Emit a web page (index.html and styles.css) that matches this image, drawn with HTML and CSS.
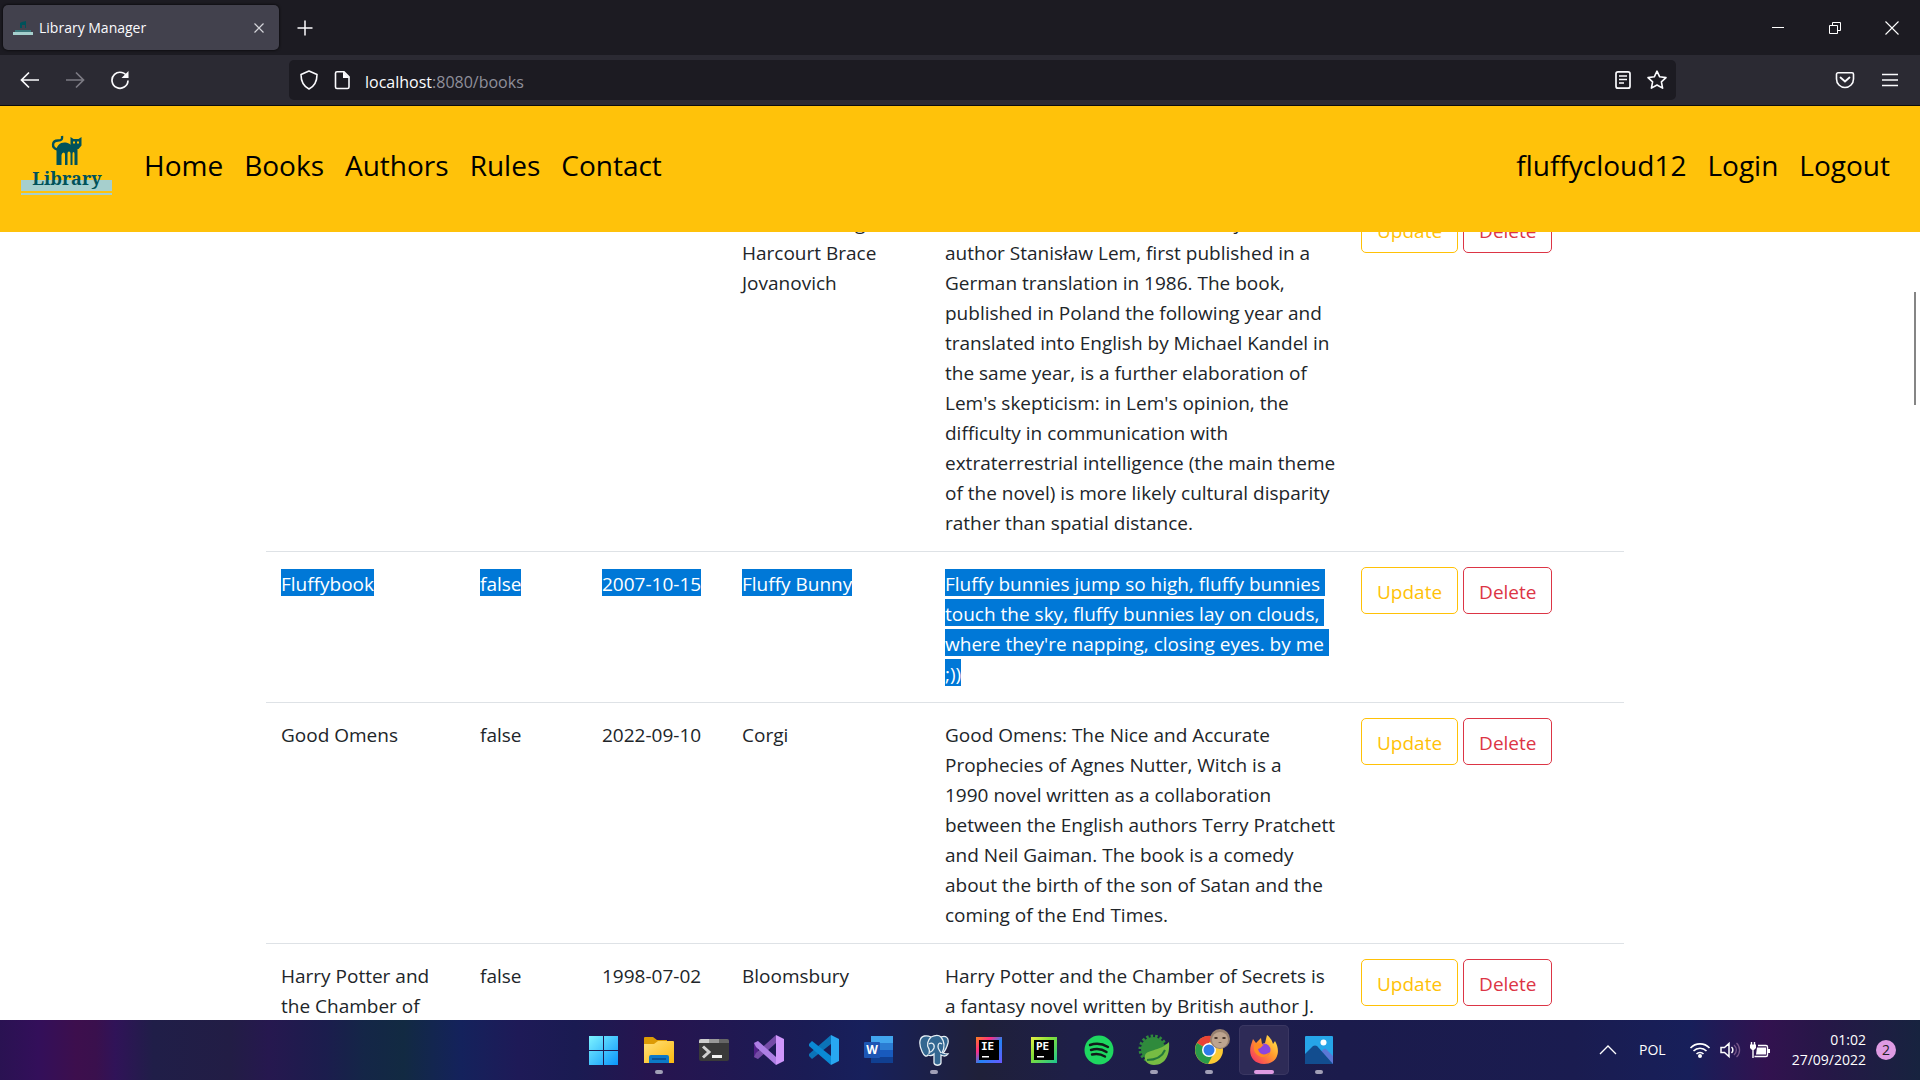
FILE: index.html
```html
<!DOCTYPE html>
<html lang="en">
<head>
<meta charset="utf-8">
<title>Library Manager</title>
<link rel="stylesheet" href="styles.css">
</head>
<body>
<div class="tabs">
  <div class="tab">
    <svg class="favicon" width="20" height="20" viewBox="0 0 20 20"><path d="M7 10V5l2-1 4-1v7h-1V7H9v3z" fill="#00525a"/><path d="M0 14h20v3H0z" fill="#a6cfcd"/><path d="M2 12h16v2H2z" fill="#39767a"/></svg>
    <span class="tab-title">Library Manager</span>
    <button class="plain" aria-label="Close tab"><svg width="12" height="12" viewBox="0 0 12 12"><path d="M1.500 1.500l9 9m0-9l-9 9" stroke="#d4d4da" stroke-width="1.200"/></svg></button>
  </div>
  <button class="plain new-tab" aria-label="New tab"><svg width="16" height="16" viewBox="0 0 16 16"><path d="M8 .5v15M.5 8h15" stroke="#fbfbfe" stroke-width="1.500"/></svg></button>
  <div class="window-buttons">
    <button class="plain" aria-label="Minimize"><svg width="14" height="14" viewBox="0 0 14 14"><path d="M1 6.500h12" stroke="#fff"/></svg></button>
    <button class="plain" aria-label="Restore"><svg width="14" height="14" viewBox="0 0 14 14"><path d="M1.500 4.500h8v8h-8zM4.500 4V1.500h8v8H10" fill="none" stroke="#fff"/></svg></button>
    <button class="plain" aria-label="Close"><svg width="14" height="14" viewBox="0 0 14 14"><path d="M.5.5l13 13m0-13l-13 13" stroke="#fff" stroke-width="1.100"/></svg></button>
  </div>
</div>
<div class="toolbar">
  <div class="history">
    <button class="plain" aria-label="Back"><svg width="20" height="20" viewBox="0 0 20 20"><path d="M19 10H2M9 2.500L1.500 10 9 17.500" fill="none" stroke="#fbfbfe" stroke-width="1.700"/></svg></button>
    <button class="plain" aria-label="Forward"><svg width="20" height="20" viewBox="0 0 20 20"><path d="M1 10h17M11 2.500l7.500 7.500-7.500 7.500" fill="none" stroke="#7c7b84" stroke-width="1.700"/></svg></button>
    <button class="plain" aria-label="Reload"><svg width="20" height="20" viewBox="0 0 20 20"><path d="M17.500 7.500A8 8 0 1 0 18 10.500" fill="none" stroke="#fbfbfe" stroke-width="1.700"/><path d="M18.500 1v7h-7z" fill="#fbfbfe"/></svg></button>
  </div>
  <div class="url-bar">
    <svg width="20" height="20" viewBox="0 0 20 20"><path d="M10 1l8 3.500c0 6-2 11.500-8 14.500-6-3-8-8.500-8-14.500z" fill="none" stroke="#fbfbfe" stroke-width="1.600" stroke-linejoin="round"/></svg>
    <svg width="18" height="20" viewBox="0 0 18 20"><path d="M4 1.800h7l5 5V17a1.500 1.500 0 0 1-1.500 1.500H4A1.500 1.500 0 0 1 2.500 17V3.300A1.500 1.500 0 0 1 4 1.800z" fill="none" stroke="#fbfbfe" stroke-width="1.600"/><path d="M10 1.500l6.500 6.500H10z" fill="#fbfbfe"/></svg>
    <span class="url"><b>localhost</b>:8080/books</span>
    <button class="plain" aria-label="Reader view"><svg width="18" height="20" viewBox="0 0 18 20"><rect x="2" y="1.800" width="14" height="16.400" rx="2" fill="none" stroke="#fbfbfe" stroke-width="1.700"/><path d="M5 6h8M5 9.500h8M5 13h5" stroke="#fbfbfe" stroke-width="1.300"/></svg></button>
    <button class="plain" aria-label="Bookmark"><svg width="22" height="20" viewBox="0 0 22 20"><path d="M11 1.200l2.700 5.600 6.300.8-4.600 4.200 1.200 6.300L11 15l-5.600 3.100 1.200-6.300L2 7.600l6.300-.8z" fill="none" stroke="#fbfbfe" stroke-width="1.600" stroke-linejoin="round"/></svg></button>
  </div>
  <div class="tools">
    <button class="plain" aria-label="Save to Pocket"><svg width="20" height="18" viewBox="0 0 20 18"><path d="M3 1.800h14a1.500 1.500 0 0 1 1.500 1.500V8a8.500 8.500 0 0 1-17 0V3.300A1.500 1.500 0 0 1 3 1.800z" fill="none" stroke="#fbfbfe" stroke-width="1.600"/><path d="M5.500 6.500L10 10.500l4.500-4" fill="none" stroke="#fbfbfe" stroke-width="1.800" stroke-linecap="round"/></svg></button>
    <button class="plain" aria-label="Menu"><svg width="16" height="16" viewBox="0 0 16 16"><path d="M0 2.500h16M0 8h16M0 13.500h16" stroke="#fbfbfe" stroke-width="1.500"/></svg></button>
  </div>
</div>
<div class="page">
  <nav class="navbar">
    <a class="logo" href="#" aria-label="Library">
      <svg width="92" height="62" viewBox="0 0 92 62"><path d="M0 46h91v11H0zM0 59h91v2H0z" fill="#a6cfcd"/><path d="M36.500 15.500C30 14 31 6.500 37 6.500c4 0 4.500-1.500 4-4.500" fill="none" stroke="#00525a" stroke-width="2.400"/><path d="M35.500 31V17c0-6 4-9 9-8.500 4 .5 6 3.500 9 3.500l3 2v17h-3V20q0-2-1-2t-1 2v11h-2V19.500q0-2-1.500-2t-1.500 2V31h-2.500V20.500q0-2-1.500-2t-2 2.500v10z" fill="#00525a"/><path d="M49.500 3l3 2h5l3-2v8.500l-3 3.500h-5l-3-3.500z" fill="#00525a"/><path d="M52 7.500h2v2h-2zM56 7.500h2v2h-2z" fill="#ffc20a"/><text x="46" y="51" class="logo-text" text-anchor="middle">Library</text></svg>
    </a>
    <a href="#">Home</a><a href="#">Books</a><a href="#">Authors</a><a href="#">Rules</a><a href="#">Contact</a>
    <a class="user" href="#">fluffycloud12</a><a href="#">Login</a><a href="#">Logout</a>
  </nav>
  <main class="content">
    <table class="books">
      <colgroup><col class="c-title"><col class="c-rented"><col class="c-date"><col class="c-publisher"><col class="c-about"><col></colgroup>
      <tbody>
      <tr><td>Fiasco</td><td>false</td><td>1987-05-01</td><td>Fischer Verlag,<br>Harcourt Brace<br>Jovanovich</td>
        <td>Fiasco is a science fiction novel by Polish<br>author Stanisław Lem, first published in a<br>German translation in 1986. The book,<br>published in Poland the following year and<br>translated into English by Michael Kandel in<br>the same year, is a further elaboration of<br>Lem's skepticism: in Lem's opinion, the<br>difficulty in communication with<br>extraterrestrial intelligence (the main theme<br>of the novel) is more likely cultural disparity<br>rather than spatial distance.</td>
        <td><div class="actions"><button class="btn update">Update</button><button class="btn delete">Delete</button></div></td></tr>
      <tr><td><span class="selected">Fluffybook</span></td><td><span class="selected">false</span></td><td><span class="selected">2007-10-15</span></td><td><span class="selected">Fluffy Bunny</span></td>
        <td><span class="selected">Fluffy bunnies jump so high, fluffy bunnies&nbsp;<br>touch the sky, fluffy bunnies lay on clouds,&nbsp;<br>where they're napping, closing eyes. by me&nbsp;<br>;))</span></td>
        <td><div class="actions"><button class="btn update">Update</button><button class="btn delete">Delete</button></div></td></tr>
      <tr><td>Good Omens</td><td>false</td><td>2022-09-10</td><td>Corgi</td>
        <td>Good Omens: The Nice and Accurate<br>Prophecies of Agnes Nutter, Witch is a<br>1990 novel written as a collaboration<br>between the English authors Terry Pratchett<br>and Neil Gaiman. The book is a comedy<br>about the birth of the son of Satan and the<br>coming of the End Times.</td>
        <td><div class="actions"><button class="btn update">Update</button><button class="btn delete">Delete</button></div></td></tr>
      <tr><td>Harry Potter and<br>the Chamber of</td><td>false</td><td>1998-07-02</td><td>Bloomsbury</td>
        <td>Harry Potter and the Chamber of Secrets is<br>a fantasy novel written by British author J.</td>
        <td><div class="actions"><button class="btn update">Update</button><button class="btn delete">Delete</button></div></td></tr>
      </tbody>
    </table>
  </main>
  <div class="scroll-thumb"></div>
</div>
<footer class="taskbar">
  <div class="apps">
    <button class="app" aria-label="Start"><svg width="32" height="32" viewBox="0 0 32 32"><defs><linearGradient id="win" x1="0" y1="0" x2="1" y2="1"><stop stop-color="#7df3ff"/><stop offset="1" stop-color="#0a95fb"/></linearGradient></defs><path d="M1 2h14v14H1zM16 2h14v14H16zM1 17h14v14H1zM16 17h14v14H16z" fill="url(#win)"/></svg></button>
    <button class="app open" aria-label="File Explorer"><svg width="32" height="32" viewBox="0 0 32 32"><defs><linearGradient id="fold" x1="0" y1="0" x2="1" y2="1"><stop stop-color="#ffe07a"/><stop offset="1" stop-color="#fcb90f"/></linearGradient></defs><path d="M1 4q0-1 1-1h8l4 3h10v8H1z" fill="#dd9b05"/><path d="M1 10h10l4-3h15q1 0 1 1v21H1z" fill="url(#fold)"/><path d="M6 29v-6q0-2 2-2h16q2 0 2 2v6z" fill="#0c79c8"/><path d="M9 25h14" stroke="#07488a" stroke-width="1.500"/></svg></button>
    <button class="app" aria-label="Terminal"><svg width="32" height="32" viewBox="0 0 32 32"><rect x="1" y="5" width="30" height="22" rx="2" fill="#3a3a3a"/><path d="M3 5h8v4H1V7q0-2 2-2z" fill="#ccc"/><path d="M11 5h10v4H11z" fill="#999"/><path d="M21 5h8q2 0 2 2v2H21z" fill="#666"/><path d="M5 12.500l6 5.500-6 5.500" fill="none" stroke="#d0d0d0" stroke-width="3"/><path d="M14 21h10v3H14z" fill="#f1f1f1"/></svg></button>
    <button class="app" aria-label="Visual Studio"><svg width="32" height="32" viewBox="0 0 32 32"><path d="M1 9l4-2v18l-4-2z" fill="#52218a"/><path d="M1 23l4 2L23 9V1L3 19z" fill="#744ba6"/><path d="M1 9l4-2 18 16v8L3 13z" fill="#ad7fe4"/><path d="M23 1l8 4v22l-8 4z" fill="#cf96fb"/></svg></button>
    <button class="app" aria-label="Visual Studio Code"><svg width="32" height="32" viewBox="0 0 32 32"><path d="M1 22l3 3L23 10V1L1 20z" fill="#0b73b8"/><path d="M1 10l3-3 19 15v9L1 12z" fill="#0a89d4"/><path d="M23 1l8 4v22l-8 4z" fill="#28a7f1"/></svg></button>
    <button class="app" aria-label="Word"><svg width="32" height="32" viewBox="0 0 32 32"><path d="M8 2h22v7H8z" fill="#41a5ee"/><path d="M8 9h22v7H8z" fill="#2b7cd3"/><path d="M8 16h22v7H8z" fill="#185abd"/><path d="M8 23h22v6H8z" fill="#103f91"/><rect x="1" y="8" width="16" height="16" rx="1" fill="#1d56b4"/><text x="9" y="20" class="word-letter" text-anchor="middle">W</text></svg></button>
    <button class="app open" aria-label="pgAdmin"><svg width="32" height="32" viewBox="0 0 32 32"><g fill="#336791" stroke="#e5edf3" stroke-width="1.300"><path d="M10 21C6 26 1 12 2 7c1-6 7-6 11-4 4-2 8-2 10 0 5-2 8 1 7 6-1 4-3 8-5 10 2 1 4 1 5 1-2 3-5 2-7 1v8c-1 3-6 3-7 0v-9c-2 2-4 2-6 1z"/><path d="M13 3c-3 3-5 8-2 12 1 2 0 4 0 5M23 3c4 5 4 10 1 16M11 10c3-2 6 0 5 4-1 2-2 4-4 4M24 10c-3-2-4 0-4 3 0 2 2 4 3 6" fill="none"/></g></svg></button>
    <button class="app" aria-label="IntelliJ IDEA"><svg width="32" height="32" viewBox="0 0 32 32"><defs><linearGradient id="ij" x1="0" y1="0" x2="1" y2="1"><stop stop-color="#fc801d"/><stop offset=".3" stop-color="#fe2d85"/><stop offset=".55" stop-color="#2284f5"/><stop offset="1" stop-color="#6b57ff"/></linearGradient></defs><path d="M3 3h26v26H3z" fill="url(#ij)"/><path d="M6 6h20v20H6z"/><text x="8" y="16" class="ide-letter">IE</text><path d="M9 22h7v1.500H9z" fill="#fff"/></svg></button>
    <button class="app" aria-label="PyCharm"><svg width="32" height="32" viewBox="0 0 32 32"><defs><linearGradient id="pc" x1="0" y1="0" x2="1" y2="1"><stop stop-color="#e7f045"/><stop offset=".4" stop-color="#83df38"/><stop offset="1" stop-color="#1cc590"/></linearGradient></defs><path d="M3 3h26v26H3z" fill="url(#pc)"/><path d="M6 6h20v20H6z"/><text x="8" y="16" class="ide-letter">PE</text><path d="M9 22h7v1.500H9z" fill="#fff"/></svg></button>
    <button class="app" aria-label="Spotify"><svg width="32" height="32" viewBox="0 0 32 32"><circle cx="16" cy="16" r="14.500" fill="#1ed760"/><path d="M7 11c6-2 13-1 18 2M8 16c5-1.500 11-1 15.500 2M9 20.500c4-1 9-.5 13 2" fill="none" stroke="#121a1a" stroke-width="2.400" stroke-linecap="round"/></svg></button>
    <button class="app open" aria-label="Spring Tools"><svg width="32" height="32" viewBox="0 0 32 32"><circle cx="15" cy="15" r="12" fill="#2f8a3c"/><circle cx="15" cy="15" r="13" fill="none" stroke="#2f8a3c" stroke-width="3" stroke-dasharray="2.500 2"/><path d="M31 8c1 12-3 23-15 23-6 0-10-4-9-9 1-7 14-4 24-14z" fill="#77bc43"/><path d="M9 26c8 0 15-3 18-10" stroke="#23783b" stroke-width="2" fill="none"/></svg></button>
    <button class="app open" aria-label="Chrome"><svg width="32" height="32" viewBox="0 0 32 32"><circle cx="16" cy="16" r="14" fill="#fcc934"/><path d="M16 16L4 9a14 14 0 0 1 24-1H16z" fill="#ea4335"/><path d="M4 9a14 14 0 0 0 11 21l6-11-5-3z" fill="#2a9b4a"/><circle cx="16" cy="16" r="7" fill="#fff"/><circle cx="16" cy="16" r="5.500" fill="#2f7bea"/></svg><svg class="avatar" width="20" height="20" viewBox="0 0 20 20"><circle cx="10" cy="10" r="10" fill="#97806f"/><circle cx="10" cy="11" r="8" fill="#bda48f"/><path d="M4.500 8h3v2h-3zM12.500 8h3v2h-3zM8 14q2-1.500 4 0" fill="#4a382f"/></svg></button>
    <button class="app open active" aria-label="Firefox"><svg width="32" height="32" viewBox="0 0 32 32"><defs><linearGradient id="fx" x1="1" y1="0" x2="0" y2="1"><stop stop-color="#fff44f"/><stop offset=".45" stop-color="#ff9a2d"/><stop offset="1" stop-color="#f5226d"/></linearGradient></defs><path d="M19 1c4 3 5 6 6 9l2-3c6 10 3 23-11 23C5 30 0 21 3 11l2-6 3 4 5-5 1 6 3-1z" fill="url(#fx)"/><circle cx="16" cy="16" r="6.500" fill="#8a45e0"/><path d="M6 10c3-1 6-1 10 1-2 0-2 3-6 4 1 6 7 7 12 3-2 7-13 7-16-2z" fill="#ff8a24"/></svg></button>
    <button class="app open" aria-label="Photos"><svg width="32" height="32" viewBox="0 0 32 32"><rect x="2" y="2" width="28" height="28" rx="1" fill="#26a5e8"/><path d="M13 22l8-7q1-1 2 0l7 7v8H13z" fill="#5a78d6"/><path d="M2 20l8-8q2-1 4 0l16 18H2z" fill="#124d8f"/><circle cx="20.500" cy="8.500" r="3" fill="#fff"/></svg></button>
  </div>
  <div class="tray">
    <svg width="18" height="12" viewBox="0 0 18 12"><path d="M1 10l8-8 8 8" fill="none" stroke="#fff" stroke-width="1.300"/></svg>
    <span class="lang">POL</span>
    <div class="status">
      <svg width="22" height="18" viewBox="0 0 22 18"><g fill="none" stroke="#fff" stroke-width="1.600"><path d="M1.500 7a13 13 0 0 1 19 0M4.500 10a9 9 0 0 1 13 0M7.500 13a5 5 0 0 1 7 0"/></g><circle cx="11" cy="15" r="2" fill="#fff"/></svg>
      <svg width="22" height="18" viewBox="0 0 22 18"><path d="M2 6.500h3.500L10 2.500v13l-4.500-4H2zM12.500 6a4 4 0 0 1 0 6" fill="none" stroke="#fff" stroke-width="1.500"/><path d="M15 4a6.500 6.500 0 0 1 0 10M17.500 2a9.500 9.500 0 0 1 0 14" fill="none" stroke="#77568a" stroke-width="1.300"/></svg>
      <svg width="22" height="18" viewBox="0 0 22 18"><path d="M2.500 1v3M5.500 1v3M4 8v9M9 4.500h8q1.500 0 1.500 1.500v8q0 1.500-1.500 1.500H5.500" fill="none" stroke="#fff" stroke-width="1.400"/><path d="M1 3.500h6V7L5 9H3L1 7zM8 6.500h9v7H7zM19 8h2v4h-2z" fill="#fff"/></svg>
    </div>
    <div class="clock">01:02<br>27/09/2022</div>
    <span class="badge">2</span>
  </div>
</footer>
</body>
</html>
```
FILE: styles.css
```css
* { box-sizing: border-box; }
body {
  margin: 0;
  height: 100vh;
  display: flex;
  flex-direction: column;
  overflow: hidden;
  background: #fff;
  color: #212529;
  font: 19px/30px "Open Sans", "Noto Sans", sans-serif;
}
svg { display: block; }
.plain { display: grid; place-items: center; padding: 0; border: 0; background: none; }

/* browser chrome */
.tabs { flex: none; display: flex; align-items: center; height: 55px; padding: 0 12px 0 3px; background: #1c1b22; }
.tab {
  display: flex; align-items: center; gap: 6px;
  width: 276px; height: 45px; padding: 0 14px 0 10px;
  border-radius: 5px; background: #42414d; color: #fbfbfe;
  box-shadow: 0 0 3px #000;
}
.tab-title { flex: 1; padding-top: 1px; font-size: 14px; }
.new-tab { margin-left: 18px; }
.window-buttons { display: flex; gap: 24px; margin-left: auto; }
.window-buttons .plain { width: 33px; height: 30px; }
.toolbar { flex: none; display: flex; align-items: center; height: 51px; background: #2b2a33; border-bottom: 1px solid #0c0c0d; }
.history { display: flex; gap: 25px; width: 289px; padding-left: 20px; }
.url-bar {
  flex: 1; display: flex; align-items: center; gap: 14px;
  height: 40px; padding: 0 8px 0 10px; border-radius: 5px; background: #1c1b22;
}
.url { flex: 1; padding-top: 3px; color: #8f8f9a; font-size: 16px; }
.url b { color: #fbfbfe; font-weight: 400; }
.tools { display: flex; align-items: center; justify-content: flex-end; gap: 27px; width: 244px; padding-right: 22px; }

/* page */
.page { flex: 1; min-height: 0; position: relative; overflow: hidden; }
.navbar {
  position: relative; z-index: 1;
  display: flex; align-items: center; gap: 21px;
  height: 126px; padding: 0 30px 8px 21px; background: #ffc20a;
  font-size: 28px;
}
.navbar a { color: #000; text-decoration: none; }
.navbar .logo { margin-right: 10px; }
.logo-text { font: 700 18px "Noto Serif", "DejaVu Serif", serif; fill: #00525a; }
.navbar .user { margin-left: auto; }
.content { margin: -42px 296px 0 266px; }
.books { width: 100%; table-layout: fixed; border-collapse: separate; border-spacing: 0; }
.books td { padding: 17px 15px 13px; border-top: 1px solid #dee2e6; vertical-align: top; white-space: nowrap; }
.books td:last-child { padding-top: 15px; }
.c-title { width: 199px; }
.c-rented { width: 122px; }
.c-date { width: 140px; }
.c-publisher { width: 203px; }
.c-about { width: 416px; }
.selected {
  padding-top: 2px; color: #fff;
  background: linear-gradient(#0078d7, #0078d7) no-repeat 0 0 / 100% 27px;
  -webkit-box-decoration-break: clone; box-decoration-break: clone;
}
.actions { display: flex; gap: 5px; }
.btn {
  height: 47px; padding: 2px 15px 0; border: 1px solid; border-radius: 5px;
  background: none; font: inherit;
}
.update { color: #ffc107; border-color: #ffc107; }
.delete { color: #dc3545; border-color: #dc3545; }
.scroll-thumb { position: absolute; right: 4px; top: 186px; width: 2px; height: 113px; background: #858585; }

/* taskbar */
.taskbar {
  flex: none; position: relative; display: flex; align-items: center; justify-content: center; height: 60px;
  background: linear-gradient(90deg, #2a1252, #330f5a 2%, #3d0f4d 4%, #3a104d 5%, #301358 6%, #201e48 8%, #221d45 12%, #26184f 14%, #1b1d4d 17%, #142647 19%, #122a42 21%, #14225c 24%, #1e1a57 27%, #1a1b52 30%, #27144f 34%, #1a1c55 42%, #17205c 45%, #1f2039 51%, #1e1f48 56%, #1b1b4c 70%, #1a1c50 82%, #171f5a 88%, #32124f 92%, #261747 95%, #17233f);
}
.apps { display: flex; gap: 5px; margin-left: 3px; }
.app {
  position: relative; display: grid; place-items: center; width: 50px; height: 50px;
  padding: 0; border: 0; border-radius: 5px; background: none;
}
.open::after { content: ""; position: absolute; bottom: 1px; left: 21px; width: 8px; height: 4px; border-radius: 2px; background: #a19fb6; }
.active { background: #2e2b57; box-shadow: inset 0 0 0 1px #3a3762; }
.active::after { left: 15px; width: 20px; background: #df9be3; }
.avatar { position: absolute; right: 4px; top: 4px; }
.word-letter { font: 700 12px "Open Sans", sans-serif; fill: #fff; }
.ide-letter { font: 700 11px "DejaVu Sans Mono", monospace; fill: #fff; }
.tray { position: absolute; right: 24px; display: flex; align-items: center; color: #fff; font-size: 14px; line-height: 20px; }
.lang { margin: 0 23px 0 22px; }
.status { display: flex; gap: 8px; }
.clock { margin: 0 10px 0 21px; text-align: right; }
.badge { width: 20px; height: 20px; border-radius: 50%; background: #df9be3; color: #222; font-size: 14px; text-align: center; }
```
